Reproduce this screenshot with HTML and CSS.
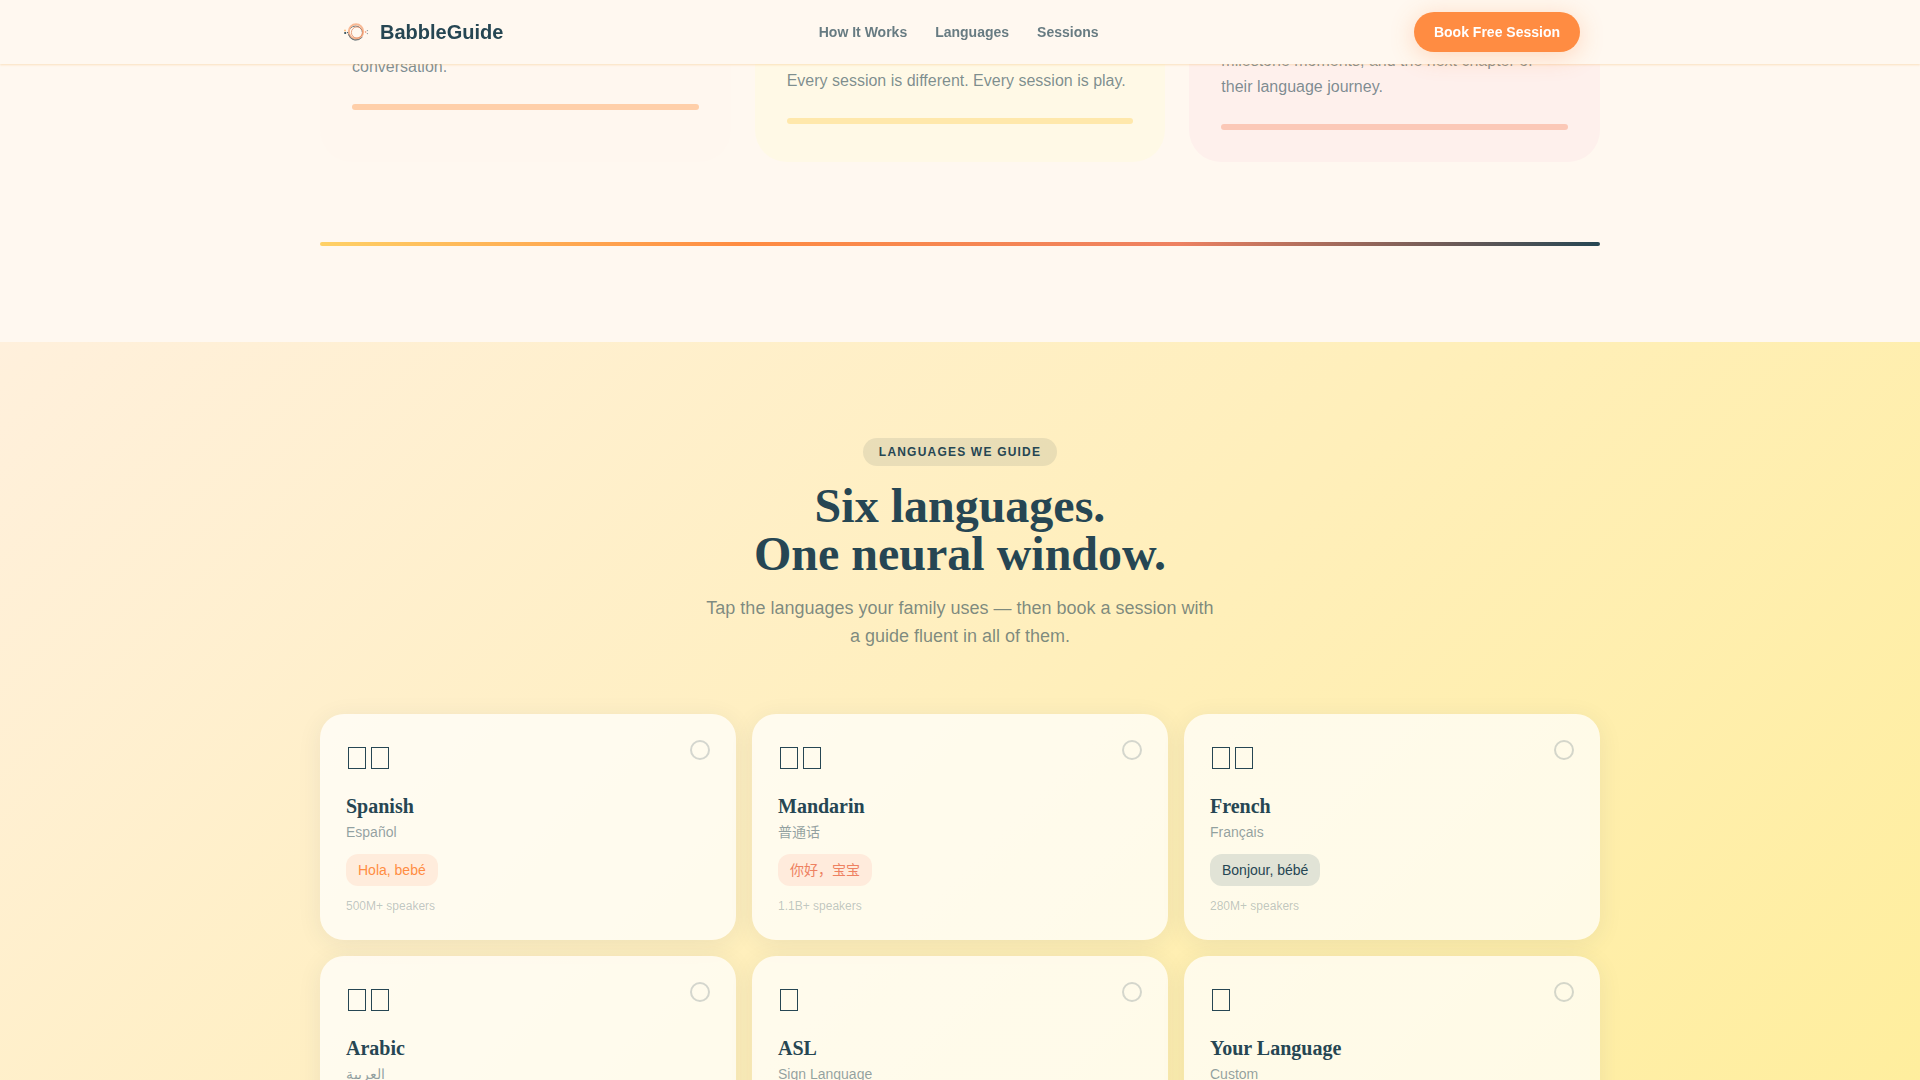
FILE: index.html
```html
<!DOCTYPE html>
<html lang="en">
<head>
  <meta charset="UTF-8">
  <meta name="viewport" content="width=device-width, initial-scale=1.0">
  <title>BabbleGuide</title>
  <link rel="stylesheet" href="styles.css">
</head>
<body>

  <header class="site-header">
    <div class="container header-inner">
      <a href="#" class="logo">
        <svg class="logo-mark" viewBox="0 0 32 32" fill="none" aria-hidden="true">
          <circle cx="15.5" cy="17" r="7" stroke="#264653" stroke-width="1" opacity="0.75"/>
          <circle cx="16" cy="15.5" r="7.2" stroke="#F9B994" stroke-width="2"/>
          <circle cx="17" cy="16.5" r="5.6" stroke="#E08A62" stroke-width="0.8"/>
          <path d="M8.5 18a8 8 0 0 0 14 3" stroke="#6B6F70" stroke-width="0.8"/>
          <circle cx="5" cy="14.5" r="0.9" fill="#FFB870"/>
          <circle cx="5.2" cy="17" r="1.1" fill="#264653"/>
          <circle cx="7.6" cy="16.6" r="0.6" fill="#264653"/>
          <circle cx="25.6" cy="16" r="0.8" fill="#E9886A"/>
          <circle cx="27.4" cy="14.6" r="0.7" fill="#8D9A9C"/>
          <circle cx="27.4" cy="17.6" r="0.7" fill="#8D9A9C"/>
        </svg>
        <span>BabbleGuide</span>
      </a>
      <nav class="nav-links">
        <a href="#how">How It Works</a>
        <a href="#languages">Languages</a>
        <a href="#sessions">Sessions</a>
      </nav>
      <button type="button" class="book-btn">Book Free Session</button>
    </div>
  </header>

  <main>
    <section id="how" class="steps">
      <div class="container">
        <div class="steps-grid">
          <div class="step step-orange">
            <p>conversation.</p>
            <div class="step-bar"></div>
          </div>
          <div class="step step-yellow">
            <p>Every session is different. Every session is play.</p>
            <div class="step-bar"></div>
          </div>
          <div class="step step-coral">
            <p>milestone moments, and the next chapter of their language journey.</p>
            <div class="step-bar"></div>
          </div>
        </div>
        <div class="rainbow-line"></div>
      </div>
    </section>

    <section id="languages" class="languages">
      <div class="container">
        <div class="section-head">
          <span class="badge">LANGUAGES WE GUIDE</span>
          <h2>Six languages.<br>One neural window.</h2>
          <p>Tap the languages your family uses — then book a session with a guide fluent in all of them.</p>
        </div>

        <div class="lang-grid">
          <button type="button" class="lang-card" aria-pressed="false">
            <span class="check"></span>
            <span class="flag"><i></i><i></i></span>
            <span class="name">Spanish</span>
            <span class="native">Español</span>
            <span class="phrase phrase-orange">Hola, bebé</span>
            <span class="speakers">500M+ speakers</span>
          </button>
          <button type="button" class="lang-card" aria-pressed="false">
            <span class="check"></span>
            <span class="flag"><i></i><i></i></span>
            <span class="name">Mandarin</span>
            <span class="native" lang="zh">普通话</span>
            <span class="phrase phrase-coral" lang="zh">你好，宝宝</span>
            <span class="speakers">1.1B+ speakers</span>
          </button>
          <button type="button" class="lang-card" aria-pressed="false">
            <span class="check"></span>
            <span class="flag"><i></i><i></i></span>
            <span class="name">French</span>
            <span class="native">Français</span>
            <span class="phrase phrase-navy">Bonjour, bébé</span>
            <span class="speakers">280M+ speakers</span>
          </button>
          <button type="button" class="lang-card" aria-pressed="false">
            <span class="check"></span>
            <span class="flag"><i></i><i></i></span>
            <span class="name">Arabic</span>
            <span class="native" lang="ar">العربية</span>
            <span class="phrase phrase-orange" lang="ar">مرحبا</span>
            <span class="speakers">400M+ speakers</span>
          </button>
          <button type="button" class="lang-card" aria-pressed="false">
            <span class="check"></span>
            <span class="flag"><i></i></span>
            <span class="name">ASL</span>
            <span class="native">Sign Language</span>
            <span class="phrase phrase-coral">Hello, baby</span>
            <span class="speakers">500K+ signers</span>
          </button>
          <button type="button" class="lang-card" aria-pressed="false">
            <span class="check"></span>
            <span class="flag"><i></i></span>
            <span class="name">Your Language</span>
            <span class="native">Custom</span>
            <span class="phrase phrase-navy">Just ask us</span>
            <span class="speakers">40+ available</span>
          </button>
        </div>
      </div>
    </section>
  </main>

  <script>
    // Toggle a language on tap
    document.querySelectorAll(".lang-card").forEach(card => {
      card.addEventListener("click", () => {
        let on = card.getAttribute("aria-pressed") === "true";
        card.setAttribute("aria-pressed", String(!on));
      });
    });
  </script>

</body>
</html>
```
FILE: styles.css
```css
:root {
  --navy: #264653;
  --orange: #ff8c42;
  --coral: #ee8161;
  --yellow: #ffd166;
  --cream: #fff8f0;
}
* {
  box-sizing: border-box;
}
body {
  margin: 0;
  font-family: "Liberation Sans", "Noto Sans CJK SC", Arial, sans-serif;
  font-size: 16px;
  color: var(--navy);
  background: var(--cream);
}
button {
  font-family: inherit;
  color: inherit;
  border: none;
  cursor: pointer;
}
.container {
  max-width: 1280px;
  margin: 0 auto;
}

/* Header */
.site-header {
  position: fixed;
  top: 0;
  left: 0;
  right: 0;
  z-index: 10;
  background: var(--cream);
  box-shadow: 0 1px 2px rgba(240, 180, 100, 0.35);
}
.header-inner {
  display: flex;
  align-items: center;
  justify-content: space-between;
  padding: 12px 20px;
}
.logo {
  display: flex;
  align-items: center;
  gap: 8px;
  font-size: 20px;
  font-weight: bold;
  color: var(--navy);
  text-decoration: none;
}
.logo-mark {
  width: 32px;
  height: 32px;
}
.nav-links {
  display: flex;
  gap: 28px;
}
.nav-links a {
  font-size: 14px;
  font-weight: bold;
  color: rgba(38, 70, 83, 0.7);
  text-decoration: none;
}
.book-btn {
  height: 40px;
  padding: 0 20px;
  font-size: 14px;
  font-weight: bold;
  color: #fff;
  background: var(--orange);
  border-radius: 20px;
  box-shadow: 0 4px 24px rgba(255, 140, 66, 0.3);
}

/* Steps */
.steps {
  padding-bottom: 96px;
}
.steps-grid {
  display: grid;
  grid-template-columns: repeat(3, 1fr);
  gap: 24px;
}
.step {
  padding: 48px 32px 32px;
  border-radius: 0 0 32px 32px;
}
.step p {
  margin: 0;
  line-height: 26px;
  color: rgba(38, 70, 83, 0.6);
}
.step-bar {
  height: 6px;
  margin-top: 24px;
  border-radius: 3px;
}
.step-orange {
  padding-top: 54px;
  background: #fff7ef;
}
.step-orange .step-bar {
  background: #ffcfa9;
}
.step-yellow {
  padding-top: 68px;
  background: #fff9e6;
}
.step-yellow .step-bar {
  background: #ffe8ab;
}
.step-coral {
  background: #fef0ec;
}
.step-coral .step-bar {
  background: #fbc8b7;
}
.rainbow-line {
  height: 4px;
  margin-top: 80px;
  border-radius: 2px;
  background: linear-gradient(90deg, var(--yellow), var(--orange) 33%, var(--coral) 67%, var(--navy));
}

/* Languages */
.languages {
  padding: 96px 0;
  background: linear-gradient(135deg, #fff0dc, #ffee99);
}
.section-head {
  display: flex;
  flex-direction: column;
  align-items: center;
  gap: 16px;
  margin-bottom: 64px;
  text-align: center;
}
.badge {
  padding: 6px 16px;
  font-size: 12px;
  font-weight: bold;
  line-height: 16px;
  letter-spacing: 0.1em;
  background: rgba(38, 70, 83, 0.1);
  border-radius: 14px;
}
.section-head h2 {
  margin: 0;
  font-family: "Liberation Serif", "Times New Roman", serif;
  font-size: 48px;
  line-height: 48px;
}
.section-head p {
  max-width: 512px;
  margin: 0;
  font-size: 18px;
  line-height: 28px;
  color: rgba(38, 70, 83, 0.6);
}
.lang-grid {
  display: grid;
  grid-template-columns: repeat(3, 1fr);
  gap: 16px;
}
.lang-card {
  position: relative;
  display: flex;
  flex-direction: column;
  align-items: flex-start;
  padding: 26px;
  text-align: left;
  background: rgba(255, 255, 255, 0.72);
  border-radius: 24px;
  box-shadow: 0 4px 24px rgba(38, 70, 83, 0.08);
}
.lang-card[aria-pressed="true"] .check {
  background: var(--orange);
  border-color: var(--orange);
}
.check {
  position: absolute;
  top: 26px;
  right: 26px;
  width: 20px;
  height: 20px;
  border: 2px solid rgba(38, 70, 83, 0.2);
  border-radius: 50%;
}
.flag {
  display: flex;
  align-items: center;
  gap: 5px;
  height: 36px;
  margin-bottom: 16px;
  padding-left: 2px;
}
.flag i {
  width: 18px;
  height: 22px;
  border: 1px solid var(--navy);
}
.name {
  margin-bottom: 2px;
  font-family: "Liberation Serif", "Times New Roman", serif;
  font-size: 20px;
  font-weight: bold;
  line-height: 28px;
}
.native {
  margin-bottom: 12px;
  font-size: 14px;
  line-height: 20px;
  color: rgba(38, 70, 83, 0.5);
}
.phrase {
  margin-bottom: 12px;
  padding: 6px 12px;
  font-size: 14px;
  line-height: 20px;
  border-radius: 12px;
}
.phrase-orange {
  color: var(--orange);
  background: #ffecdc;
}
.phrase-coral {
  color: var(--coral);
  background: #ffebdc;
}
.phrase-navy {
  color: var(--navy);
  background: #e1e3d6;
}
.speakers {
  font-size: 12px;
  line-height: 16px;
  color: rgba(38, 70, 83, 0.3);
}
```
